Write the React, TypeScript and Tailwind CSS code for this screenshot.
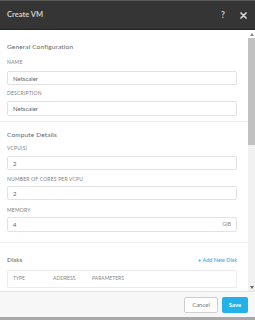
import React from "react";

function Label({ children, mt }: { children: React.ReactNode; mt: string }) {
  return (
    <div className={`${mt} h-[7px] leading-[7px] text-[5px] tracking-[0.2px] text-[#808080] uppercase`}>
      {children}
    </div>
  );
}

function Field({ value, mt, h, suffix }: { value: string; mt: string; h: string; suffix?: string }) {
  return (
    <div
      className={`${mt} ${h} mr-[11px] flex items-center justify-between rounded-[2px] border border-[#e2e2e2] bg-white pl-[5px] pr-[5px] text-[6px] text-[#5f5f5f]`}
    >
      <span>{value}</span>
      {suffix ? <span className="text-[5.5px] text-[#888]">{suffix}</span> : null}
    </div>
  );
}

export default function App() {
  return (
    <div
      className="flex h-[320px] w-[255px] flex-col overflow-hidden bg-white"
      style={{ fontFamily: "Lato, 'Open Sans', sans-serif" }}
    >
      {/* Header */}
      <div className="flex h-[30px] shrink-0 items-center justify-between border-t border-t-[#5a5a5a] border-b border-b-[#222] bg-[#353535] pl-[7px] pr-[8px]">
        <span className="text-[7.5px] font-bold text-[#cfcfcf]">Create VM</span>
        <div className="flex items-center gap-[15px] text-[#d0d0d0]">
          <span className="text-[8.5px] font-bold">?</span>
          <svg width="7" height="7" viewBox="0 0 7 7">
            <path d="M1 1 L6 6 M6 1 L1 6" stroke="#d8d8d8" strokeWidth="1.7" strokeLinecap="round" />
          </svg>
        </div>
      </div>

      {/* Body */}
      <div className="flex h-[261px] shrink-0 overflow-hidden">
        <div className="flex-1 overflow-hidden">
          {/* General */}
          <div className="border-b border-[#efefef] pb-[5px] pl-[7px] pt-[12px]">
            <div className="h-[10px] leading-[10px] text-[6.5px] tracking-[0.15px] text-[#666]">General Configuration</div>
            <Label mt="mt-[7px]">Name</Label>
            <Field value="Netscaler" mt="mt-[5px]" h="h-[14px]" />
            <Label mt="mt-[5px]">Description</Label>
            <Field value="Netscaler" mt="mt-[4px]" h="h-[15px]" />
          </div>
          {/* Compute */}
          <div className="border-b border-[#efefef] pb-[10px] pl-[7px] pt-[8px]">
            <div className="h-[10px] leading-[10px] text-[6.5px] tracking-[0.15px] text-[#666]">Compute Details</div>
            <Label mt="mt-[5px]">VCPU(S)</Label>
            <Field value="2" mt="mt-[4px]" h="h-[14px]" />
            <Label mt="mt-[6px]">Number of cores per vcpu</Label>
            <Field value="2" mt="mt-[3px]" h="h-[14px]" />
            <Label mt="mt-[7px]">Memory</Label>
            <Field value="4" mt="mt-[3px]" h="h-[15px]" suffix="GiB" />
          </div>
          {/* Disks */}
          <div className="pl-[7px] pt-[12px]">
            <div className="mr-[11px] flex h-[10px] items-center justify-between">
              <span className="text-[6.5px] text-[#666]">Disks</span>
              <span className="text-[5.5px] text-[#22a3dd]">
                <span className="font-bold">+</span> Add New Disk
              </span>
            </div>
            <div className="mr-[11px] mt-[5px] flex h-[18px] items-center rounded-[2px] border border-[#ececec] pl-[5px] text-[5px] text-[#888]">
              <span className="w-[40px]">TYPE</span>
              <span className="w-[39px]">ADDRESS</span>
              <span>PARAMETERS</span>
            </div>
          </div>
        </div>
        {/* Scrollbar */}
        <div className="flex w-[7px] shrink-0 flex-col bg-[#f1f1f1]">
          <div className="flex h-[8px] items-center justify-center bg-white">
            <svg width="4" height="3" viewBox="0 0 4 3">
              <path d="M0 3 L2 0 L4 3 Z" fill="#888" />
            </svg>
          </div>
          <div className="h-[107px] bg-[#c1c1c1]" />
          <div className="flex-1" />
          <div className="flex h-[8px] items-center justify-center">
            <svg width="4" height="3" viewBox="0 0 4 3">
              <path d="M0 0 L4 0 L2 3 Z" fill="#666" />
            </svg>
          </div>
        </div>
      </div>

      {/* Footer */}
      <div className="flex h-[26px] shrink-0 items-center justify-end gap-[4px] border-t border-[#e4e4e4] bg-[#f7f7f7] pr-[7px]">
        <div className="flex h-[16px] w-[34px] items-center justify-center rounded-[2px] border border-[#cfcfcf] bg-white text-[6px] text-[#777]">
          Cancel
        </div>
        <div className="flex h-[16px] w-[26px] items-center justify-center rounded-[2px] bg-[#22b2e8] text-[6px] font-bold text-white">
          Save
        </div>
      </div>
      <div className="h-[3px] shrink-0 bg-[#a8a8a8]" />
    </div>
  );
}
